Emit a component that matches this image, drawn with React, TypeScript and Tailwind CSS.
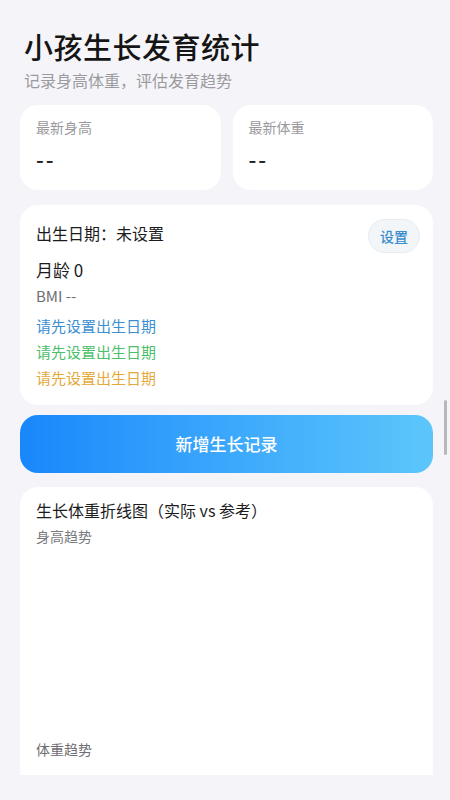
import React from "react";

export default function App() {
  const font = { fontFamily: '"Noto Sans CJK SC", "Noto Sans", sans-serif' };
  return (
    <div className="relative min-h-[800px] w-full bg-[#f5f5f9] text-[#1c1c1e]" style={font}>
      <div className="pl-5 pr-[17px] pt-[26px] pb-[25px]">
        <h1 className="ml-1 text-[29px] font-medium leading-[40px] tracking-[0.5px] text-[#151515]">小孩生长发育统计</h1>
        <p className="ml-1 mt-[2px] text-[16px] leading-[24px] text-[#9b9b9f]">记录身高体重，评估发育趋势</p>

        <div className="mt-[13px] grid grid-cols-2 gap-3">
          <div className="h-[85px] rounded-[18px] bg-white px-4 pt-[12px]">
            <div className="text-[14px] leading-[20px] text-[#9a9a9e]">最新身高</div>
            <div className="mt-[8px] text-[22px] font-medium leading-[26px] tracking-[2px] text-[#222]">--</div>
          </div>
          <div className="h-[85px] rounded-[18px] bg-white px-4 pt-[12px]">
            <div className="text-[14px] leading-[20px] text-[#9a9a9e]">最新体重</div>
            <div className="mt-[8px] text-[22px] font-medium leading-[26px] tracking-[2px] text-[#222]">--</div>
          </div>
        </div>

        <div className="mt-[15px] rounded-[18px] bg-white pl-4 pr-[13px] pb-[16px] pt-[14px]">
          <div className="flex items-start justify-between">
            <span className="mt-[2px] text-[16px] font-normal leading-[24px] text-[#1c1c1e]">出生日期：未设置</span>
            <button className="h-[34px] rounded-full border border-[#e6ebf0] bg-[#f3f6f9] px-[11px] text-[14px] font-medium text-[#3a8dcb]">设置</button>
          </div>
          <div className="mt-[4px] text-[17px] font-normal leading-[26px] text-[#1c1c1e]">月龄 0</div>
          <div className="mt-[1px] text-[15px] leading-[24px] text-[#6e6e73]">BMI --</div>
          <div className="mt-[7px] flex flex-col gap-[4px] text-[15px] leading-[22px]">
            <span className="text-[#3b8fd0]">请先设置出生日期</span>
            <span className="text-[#4cbf6b]">请先设置出生日期</span>
            <span className="text-[#e3a93a]">请先设置出生日期</span>
          </div>
        </div>

        <button className="mt-[10px] flex h-[58px] w-full items-center justify-center rounded-[18px] bg-gradient-to-r from-[#1887fb] to-[#5cc6fb] text-[17px] font-medium text-white">
          新增生长记录
        </button>

        <div className="mt-[14px] h-[288px] rounded-t-[18px] bg-white px-4 pt-[11px]">
          <div className="text-[16px] font-normal leading-[24px] text-[#1c1c1e]">生长体重折线图（实际 vs 参考）</div>
          <div className="mt-[4px] text-[14px] leading-[20px] text-[#7a7a7e]">身高趋势</div>
          <div className="h-[193px]" />
          <div className="text-[14px] leading-[20px] text-[#6e6e73]">体重趋势</div>
        </div>
      </div>
      <div className="absolute right-[3px] top-[400px] h-[55px] w-[3px] rounded-full bg-[#b8b8bc]" />
    </div>
  );
}
